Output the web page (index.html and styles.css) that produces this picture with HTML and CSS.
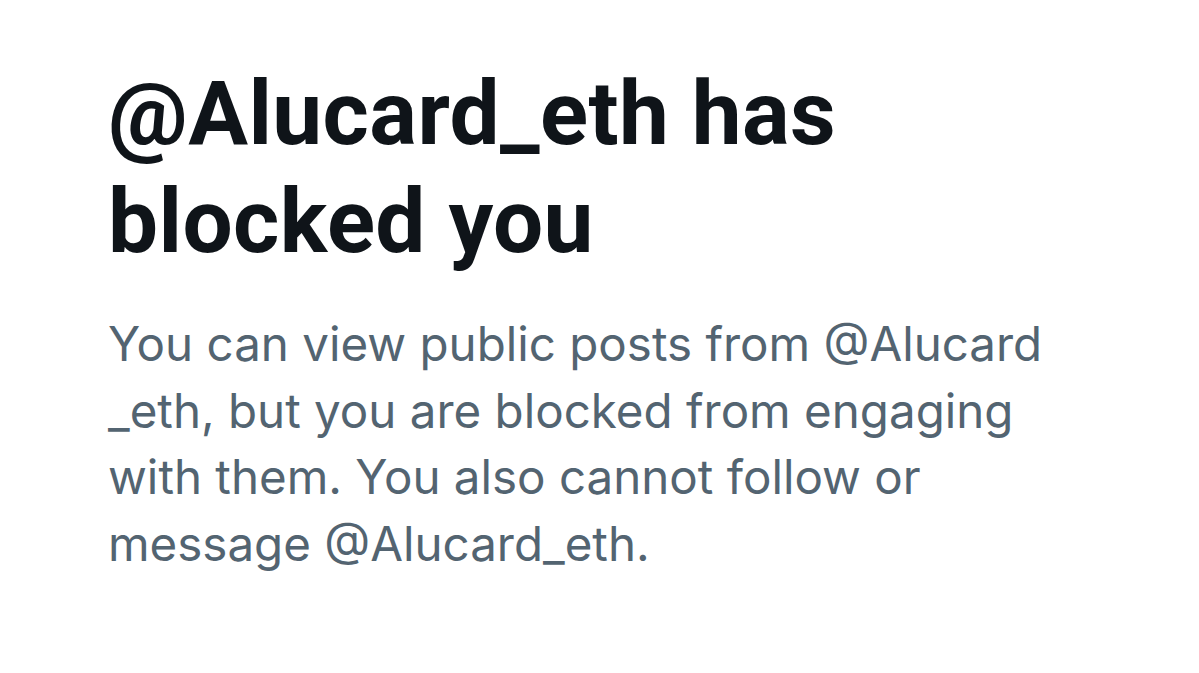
FILE: index.html
```html
<!DOCTYPE html>
<html lang="en">
<head>
    <meta charset="UTF-8">
    <meta name="viewport" content="width=device-width, initial-scale=1.0">
    <title>Blocked</title>
    <link rel="stylesheet" href="styles.css">
</head>
<body>
    <div class="blocked">
        <h1>@Alucard_eth has blocked you</h1>
        <p>You can view public posts from @Alucard _eth, but you are blocked from engaging with them. You also cannot follow or message @Alucard_eth.</p>
    </div>
</body>
</html>
```

FILE: styles.css
```css
body{
    margin: 0;
    background: #fff;
    font-family: Inter, "Noto Sans", sans-serif;
}
.blocked {
    padding: 60px 0 0 108px;
    width: 945px;
}
h1 {
    margin: 0;
    font-family: Roboto, Inter, sans-serif;
    font-size: 89px;
    line-height: 108px;
    font-weight: 700;
    color: #0f1419;
    letter-spacing: 0.4px;
    width: 780px;
}
p {
    margin: 35px 0 0;
    font-size: 47.5px;
    line-height: 66.5px;
    color: #536471;
}
```
